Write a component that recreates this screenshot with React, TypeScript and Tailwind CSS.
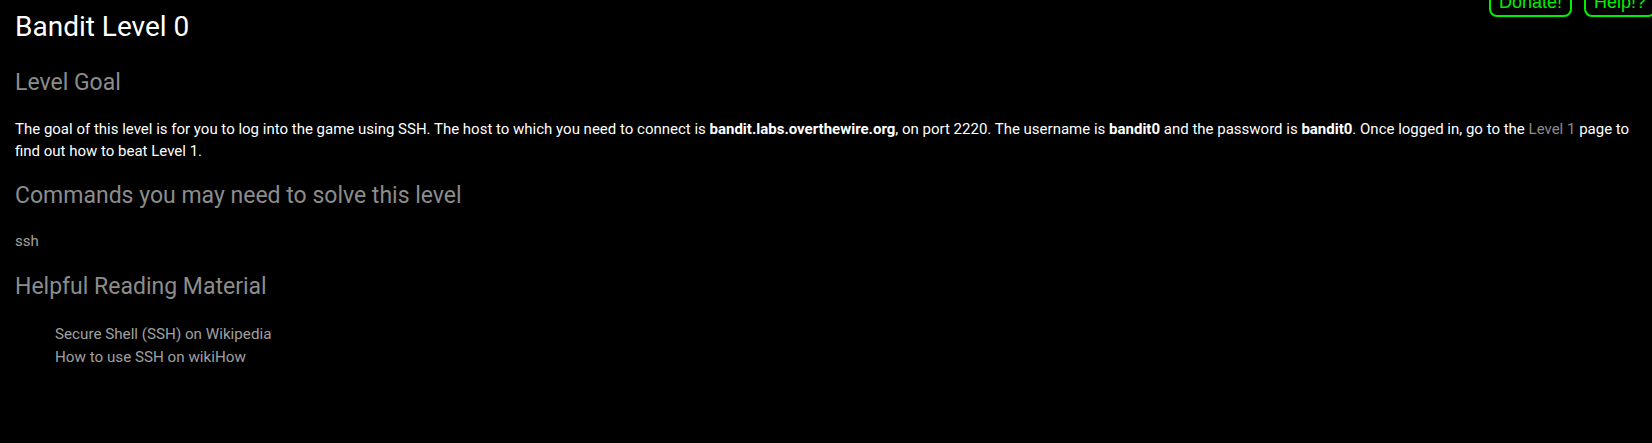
const READING = [
  { label: "Secure Shell (SSH) on Wikipedia", href: "#" },
  { label: "How to use SSH on wikiHow", href: "#" },
];

function TopButtons() {
  return (
    <div className="absolute -top-[13px] right-[-4px] flex gap-3 font-['Liberation_Sans',Arial,sans-serif] text-[18px] leading-[26px]">
      <a href="#" className="rounded-lg border-2 border-[#00f000] px-[8px] text-[#00f000]">
        Donate!
      </a>
      <a href="#" className="rounded-lg border-2 border-[#00f000] px-[8px] text-[#00f000]">
        Help!?
      </a>
    </div>
  );
}

export default function App() {
  return (
    <div className="relative min-h-[443px] overflow-hidden bg-black px-[15px] pt-[10px] font-['Roboto',sans-serif] text-white">
      <TopButtons />

      <h1 className="text-[28px] leading-[34px] font-normal">Bandit Level 0</h1>

      <h2 className="mt-[25px] text-[23px] leading-[28px] font-normal text-[#8c8c8c]">Level Goal</h2>
      <p className="mt-[21px] text-[15px] leading-[22px]">
        The goal of this level is for you to log into the game using SSH. The host to which you need
        to connect is <b>bandit.labs.overthewire.org</b>, on port 2220. The username is{" "}
        <b>bandit0</b> and the password is <b>bandit0</b>. Once logged in, go to the{" "}
        <a href="#" className="text-[#8c8c8c]">
          Level 1
        </a>{" "}
        page to find out how to beat Level 1.
      </p>

      <h2 className="mt-[20px] text-[23px] leading-[28px] font-normal text-[#8c8c8c]">
        Commands you may need to solve this level
      </h2>
      <p className="mt-[20px] text-[15px] leading-[22px] text-[#a0a0a0]">ssh</p>

      <h2 className="mt-[21px] text-[23px] leading-[28px] font-normal text-[#8c8c8c]">
        Helpful Reading Material
      </h2>
      <ul className="mt-[22px] pl-10 text-[15.2px] leading-[23px]">
        {READING.map((r) => (
          <li key={r.label}>
            <a href={r.href} className="text-[#a0a0a0]">
              {r.label}
            </a>
          </li>
        ))}
      </ul>
    </div>
  );
}
